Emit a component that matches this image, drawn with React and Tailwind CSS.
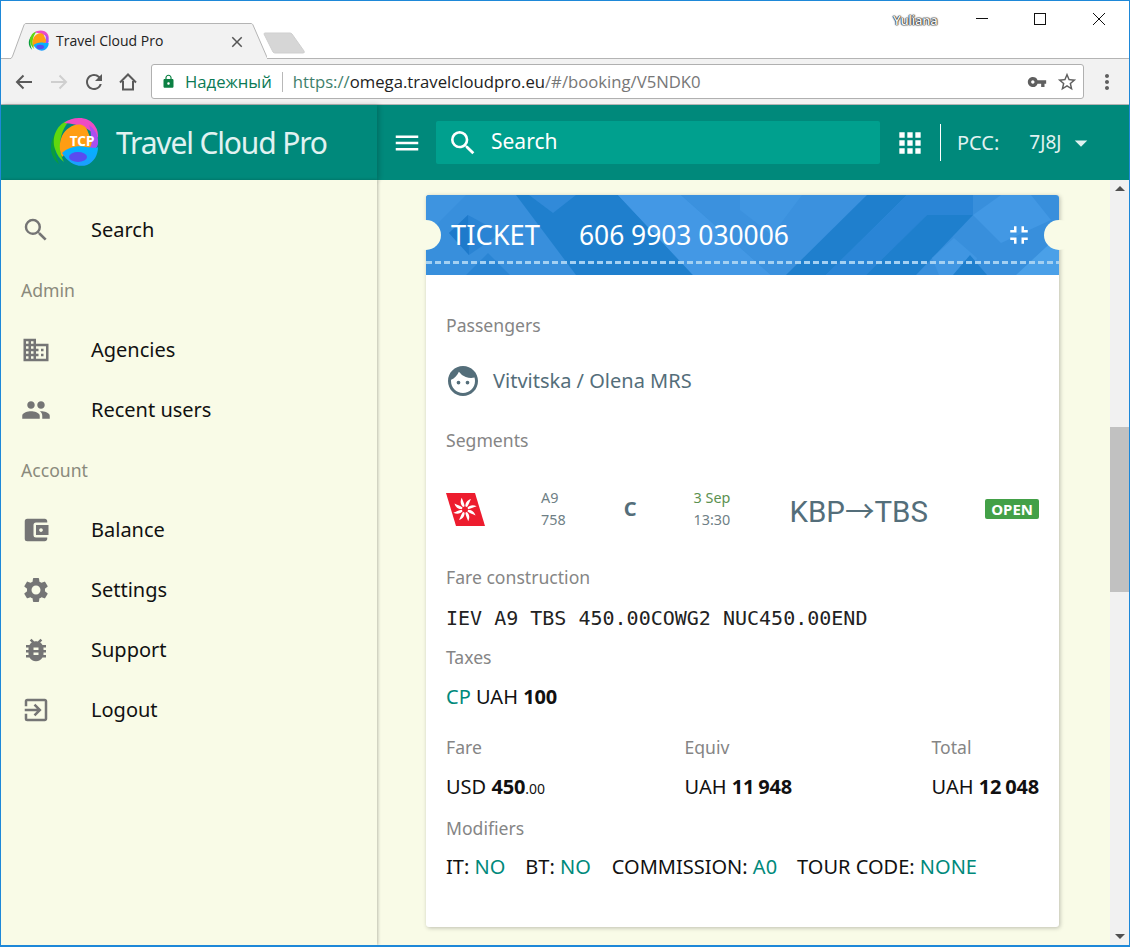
import React from "react";
import {
  MdSearch,
  MdBusiness,
  MdPeople,
  MdAccountBalanceWallet,
  MdSettings,
  MdBugReport,
  MdExitToApp,
  MdApps,
  MdMenu,
  MdFullscreenExit,
  MdFace,
  MdLock,
  MdVpnKey,
  MdStarBorder,
  MdRefresh,
  MdMoreVert,
  MdClose,
  MdArrowDropDown,
} from "react-icons/md";

const sans = "font-['Noto_Sans',sans-serif]";

function Logo({ size, label }) {
  return (
    <svg width={size} height={size} viewBox="0 0 52 52">
      <defs>
        <linearGradient id={`lg-${size}`} x1="0" y1="0" x2="0" y2="1">
          <stop offset="0" stopColor="#00b4ff" />
          <stop offset="1" stopColor="#1e9dff" />
        </linearGradient>
      </defs>
      <path d="M8 14C0 24-1 38 10 47 5 37 4 26 8 14z" fill="#0a9e3c" />
      <path d="M21 3C8 6 2 20 6 32c2 6 5 10 9 13C9 34 9 16 21 3z" fill="#5fd80f" />
      <path d="M15 6C24-1 40-1 46 9c3 4 3 8 3 12C42 12 30 7 15 6z" fill="#ee4bc4" />
      <path d="M40 8c6 4 10 11 9 19-1 5-5 7-9 5 2-8 3-16 0-24z" fill="#a94ff0" />
      <path d="M13 19c4-8 13-13 20-11 6 2 6 9 9 14 2 5-1 10-5 10-8-1-18 2-24 8-3-7-3-14 0-21z" fill="#ff9d12" />
      <path d="M13 36c6-6 16-8 24-6 6 1 12 1 12 0 0 8-4 15-11 18-9 3-19-2-25-12z" fill={`url(#lg-${size})`} />
      <ellipse cx="29" cy="40" rx="9" ry="5" fill="#5a4cf0" />
      {label && (
        <text x="33" y="29" textAnchor="middle" fontSize="13.500" fontWeight="700" fill="#fff" fontFamily="Noto Sans, sans-serif">
          TCP
        </text>
      )}
    </svg>
  );
}

function BrowserChrome() {
  return (
    <div className="shrink-0">
      <div className="relative h-[57px] bg-white">
        <svg className="absolute left-[6px] top-[22px]" width="260" height="36" viewBox="0 0 260 36">
          <path d="M0 36h1c3 0 4-1 5-4L17 2c.6-1 1-1.500 2-1.500h225c1 0 1.500.5 2 1.500l13 30c1 3 2 4 4 4" fill="#f2f2f2" stroke="#b4b4b4" />
        </svg>
        <svg className="absolute left-[261px] top-[30px]" width="46" height="24" viewBox="0 0 46 24">
          <path d="M2 3q0-1 1-1h25q1 0 2 1l12 17q1 2-1 2H13q-1 0-2-1z" fill="#d6d6d6" stroke="#cfcfcf" />
        </svg>
        <div className="absolute left-[27px] top-[29px]">
          <Logo size={22} />
        </div>
        <span className="absolute left-[55px] top-[30px] font-['Open_Sans',sans-serif] text-[14px] leading-5 text-[#222]">Travel Cloud Pro</span>
        <MdClose className="absolute left-[227px] top-[32px] text-[#555]" size={18} />
        <span className="absolute left-[892px] top-[10px] font-['Open_Sans',sans-serif] text-[13px] leading-[18px] text-[#f4f4f4] font-semibold tracking-[-0.3px] [text-shadow:0_0_1px_#222,0_0_1px_#222,0_0_1px_#222,0_0_2px_#444]">
          Yuliana
        </span>
        <svg className="absolute left-[974px] top-[11px]" width="130" height="14" viewBox="0 0 130 14">
          <path d="M1 6.500h12" stroke="#111" fill="none" />
          <rect x="59.500" y="1.500" width="11" height="11" stroke="#111" fill="none" />
          <path d="M118 1l12 12M130 1l-12 12" stroke="#111" fill="none" />
        </svg>
      </div>
      <div className="flex h-[47px] items-center border-y border-y-[#b4b4b4] bg-[#f2f2f2]">
        <div className="flex w-[150px] items-center">
          <svg className="ml-[13px]" width="20" height="20" viewBox="0 0 20 20" fill="none" stroke="#5a5a5a" strokeWidth="2">
            <path d="M18 10H3M9.500 3.500 3 10l6.500 6.500" />
          </svg>
          <svg className="ml-[15px]" width="20" height="20" viewBox="0 0 20 20" fill="none" stroke="#cfcfcf" strokeWidth="2">
            <path d="M2 10h15M10.500 3.500 17 10l-6.500 6.500" />
          </svg>
          <MdRefresh className="ml-[13px] text-[#5a5a5a]" size={24} />
          <svg className="ml-[12px]" width="20" height="20" viewBox="0 0 20 20" fill="none" stroke="#5a5a5a" strokeWidth="2">
            <path d="M2 10.500 10 2.500l8 8M5 9v8.500h10V9" />
          </svg>
        </div>
        <div className="flex h-[35px] w-[933px] items-center rounded-[3px] border border-[#b0b0b0] bg-white font-['Open_Sans',sans-serif] text-[16.700px]">
          <MdLock className="ml-[9px] text-[#0b8043]" size={15} />
          <span className="ml-[9px] text-[#0b7a55]">Надежный</span>
          <span className="ml-[10px] h-5 w-px bg-[#b8b8b8]" />
          <span className="ml-[10px] text-[#3f7f6c]">https://</span>
          <span className="text-[#222]">omega.travelcloudpro.eu</span>
          <span className="text-[#777]">/#/booking/V5NDK0</span>
          <MdVpnKey className="ml-auto text-[#5f5f5f]" size={20} />
          <MdStarBorder className="ml-[9px] mr-[5px] text-[#5f5f5f]" size={22} />
        </div>
        <MdMoreVert className="ml-[11px] text-[#5f5f5f]" size={24} />
      </div>
    </div>
  );
}

function AppHeader() {
  return (
    <div className="relative flex h-[75px] shrink-0 items-center bg-[#00897b] text-[#e0f2f1]">
      <div className="flex h-full w-[376px] shrink-0 items-center shadow-[2px_0_5px_rgba(0,0,0,0.2)]">
        <div className="ml-[48px]">
          <Logo size={52} label />
        </div>
        <span className={`${sans} ml-[15px] text-[30px] leading-10 tracking-[-1.150px]`}>Travel Cloud Pro</span>
      </div>
      <MdMenu className="ml-[15px] text-white" size={30} />
      <div className="ml-[14px] flex h-[43px] w-[444px] items-center rounded-[2px] bg-[#00a08e] text-white">
        <MdSearch className="ml-[11px]" size={32} />
        <span className={`${sans} ml-[12px] mt-[-2px] text-[21px]`}>Search</span>
      </div>
      <MdApps className="ml-[14px] text-white" size={32} />
      <span className="ml-[14px] h-[37px] w-px bg-white" />
      <span className={`${sans} ml-[16px] text-[20px]`}>PCC:</span>
      <span className={`${sans} ml-[30px] text-[19px]`}>7J8J</span>
      <MdArrowDropDown className="ml-[5px]" size={30} />
    </div>
  );
}

function NavItem({ icon: Icon, children }) {
  return (
    <div className="flex h-[60px] items-center pl-[20px]">
      <div className="flex w-[70px] items-center">
        <Icon className="text-[#757575]" size={30} />
      </div>
      <span className="text-[20px] text-[#111]">{children}</span>
    </div>
  );
}

function NavLabel({ children }) {
  return <div className="flex h-[60px] items-center pl-[20px] text-[17.600px] text-[#8a8a7c]">{children}</div>;
}

function Sidebar() {
  return (
    <div className={`${sans} z-10 h-full w-[376px] shrink-0 bg-[#f9fbe7] pt-5 shadow-[1px_0_3px_rgba(0,0,0,0.25)]`}>
      <NavItem icon={MdSearch}>Search</NavItem>
      <NavLabel>Admin</NavLabel>
      <NavItem icon={MdBusiness}>Agencies</NavItem>
      <NavItem icon={MdPeople}>Recent users</NavItem>
      <NavLabel>Account</NavLabel>
      <NavItem icon={MdAccountBalanceWallet}>Balance</NavItem>
      <NavItem icon={MdSettings}>Settings</NavItem>
      <NavItem icon={MdBugReport}>Support</NavItem>
      <NavItem icon={MdExitToApp}>Logout</NavItem>
    </div>
  );
}

// header background, polygons eyeballed from the screenshot
function TicketPattern() {
  return (
    <svg className="absolute inset-0" width="633" height="80" viewBox="0 0 633 80">
      <rect width="633" height="80" fill="#388fdc" />
      <path d="M0 0h40L0 40z" fill="#3e94e0" />
      <path d="M90 0h102l75 80H150l-30-40z" fill="#1f7fcd" />
      <path d="M103 0l24 18 23-18z" fill="#318ad9" />
      <path d="M42 20 23 38l20 22 32-22z" fill="#2a84d4" />
      <path d="M42 20 23 38l20 22z" fill="#1e7acb" />
      <path d="M40 80l22-22 22 22z" fill="#2a85d4" />
      <path d="M192 0h63l90 80h-78z" fill="#4398e5" />
      <path d="M255 0h186l-81 80h-15z" fill="#3b91de" />
      <path d="M314 0h62l-30 40-32-25z" fill="#4096e2" />
      <path d="M441 0h40l-81 80h-40z" fill="#1f7fcd" />
      <path d="M481 0h66v20h-46l-61 60h-40z" fill="#2a85d6" />
      <path d="M501 20h46l-57 60h-50z" fill="#1e7fcd" />
      <path d="M547 20 575 0h30l20 25-50 23z" fill="#4298e4" />
      <path d="M506 63l22-20 23 20-5 17h-33z" fill="#4096e2" />
      <path d="M527 80l17-20 17 20z" fill="#1f7fcd" />
      <path d="M590 80l43-40v40z" fill="#4aa0e8" />
    </svg>
  );
}

function SectionLabel({ children, className = "" }) {
  return <div className={`text-[17.600px] leading-10 text-[#858585] ${className}`}>{children}</div>;
}

function AirlineLogo() {
  const blades = [0, 45, 90, 135, 180, 225, 270, 315];
  return (
    <svg width="39" height="33" viewBox="0 0 39 33">
      <path d="M0 0h29l10 33H10z" fill="#ed1c2e" />
      <g transform="translate(19 16.500)">
        {blades.map((a) => (
          <path key={a} transform={`rotate(${a})`} d="M.5-3C0-6 2-9.500 6-10.500 4.500-8 4-5 2-2.500z" fill="#fff" />
        ))}
      </g>
    </svg>
  );
}

function Ticket() {
  return (
    <div className={`${sans} w-[633px] rounded-[3px] bg-white pb-[40px] shadow-[1px_1px_4px_rgba(0,0,0,0.25)]`}>
      <div className="relative h-20 rounded-t-[3px] text-white">
        <div className="absolute inset-0 overflow-hidden rounded-t-[3px]">
          <TicketPattern />
        </div>
        <div className="relative flex h-20 items-start pl-[25px] pt-[20px] pr-[25px]">
          <span className="text-[27.300px] leading-10">TICKET</span>
          <span className="ml-[39px] text-[26.400px] leading-10">606 9903 030006</span>
          <MdFullscreenExit className="ml-auto mt-[5px]" size={30} />
        </div>
        <div className="absolute inset-x-0 top-[66px] h-[3px] bg-[repeating-linear-gradient(90deg,#a3d0f2_0,#a3d0f2_6px,transparent_6px,transparent_9px)]" />
        <div className="absolute left-[-15px] top-[25px] size-[30px] rounded-full bg-[#f9fbe7]" />
        <div className="absolute right-[-15px] top-[25px] size-[30px] rounded-full bg-[#f9fbe7]" />
      </div>

      <div className="px-5 pt-[30px]">
        <SectionLabel>Passengers</SectionLabel>
        <div className="mt-[16px] flex h-10 items-center text-[20px] text-[#546e7a]">
          <MdFace className="ml-[-1px]" size={36} />
          <span className="ml-[12px]">Vitvitska / Olena MRS</span>
        </div>
        <SectionLabel className="mt-[19px]">Segments</SectionLabel>

        <div className="mt-[29px] flex h-10 items-center">
          <AirlineLogo />
          <div className="ml-[56px] text-[14.400px] leading-[22px] text-[#6f7f86]">
            <div>A9</div>
            <div>758</div>
          </div>
          <span className="ml-[58px] text-[20px] font-bold text-[#546e7a]">C</span>
          <div className="ml-[57px] text-[14.400px] leading-[22px]">
            <div className="text-[#5c9150]">3 Sep</div>
            <div className="text-[#6f7f86]">13:30</div>
          </div>
          <span className="ml-[59px] mt-[3px] font-['Roboto',sans-serif] text-[29.500px] text-[#546e7a]">
            KBP<span className="font-['Noto_Sans_CJK_SC',sans-serif]">→</span>TBS
          </span>
          <span className="ml-auto rounded-[2px] bg-[#43a047] px-[6px] text-[15px] font-bold leading-5 text-white">OPEN</span>
        </div>

        <SectionLabel className="mt-[28px]">Fare construction</SectionLabel>
        <div className="h-10 font-['DejaVu_Sans_Mono',monospace] text-[20px] leading-[42px] text-[#222]">IEV A9 TBS 450.00COWG2 NUC450.00END</div>
        <SectionLabel>Taxes</SectionLabel>
        <div className="text-[20px] leading-10 text-[#111]">
          <span className="text-[#00897b]">CP</span> UAH <b className="tracking-[-0.2px]">100</b>
        </div>

        <div className="mt-[10px] flex justify-between">
          <div>
            <SectionLabel>Fare</SectionLabel>
            <div className="text-[20px] leading-10 text-[#111]">
              USD <b className="tracking-[-0.2px]">450</b>
              <span className="text-[14px]">.00</span>
            </div>
          </div>
          <div>
            <SectionLabel>Equiv</SectionLabel>
            <div className="text-[20px] leading-10 text-[#111]">
              UAH <b className="tracking-[-0.2px] [word-spacing:-1px]">11 948</b>
            </div>
          </div>
          <div>
            <SectionLabel>Total</SectionLabel>
            <div className="text-[20px] leading-10 text-[#111]">
              UAH <b className="tracking-[-0.2px] [word-spacing:-1px]">12 048</b>
            </div>
          </div>
        </div>

        <SectionLabel className="mt-[-1px] h-[39px]">Modifiers</SectionLabel>
        <div className="flex gap-5 text-[20px] leading-10 text-[#111]">
          <span>
            IT: <span className="text-[#00897b]">NO</span>
          </span>
          <span>
            BT: <span className="text-[#00897b]">NO</span>
          </span>
          <span className="ml-px">
            COMMISSION: <span className="text-[#00897b]">A0</span>
          </span>
          <span>
            TOUR CODE: <span className="text-[#00897b]">NONE</span>
          </span>
        </div>
      </div>
    </div>
  );
}

function Scrollbar() {
  return (
    <div className="flex w-[19px] shrink-0 flex-col bg-[#f1f1f1]">
      <div className="flex h-[20px] items-start justify-center pt-[6px]">
        <div className="size-0 border-x-[5px] border-b-[5px] border-x-transparent border-b-[#505050]" />
      </div>
      <div className="mt-[227px] h-[165px] bg-[#c1c1c1]" />
      <div className="mt-auto flex h-[20px] items-end justify-center pb-[6px]">
        <div className="size-0 border-x-[5px] border-t-[5px] border-x-transparent border-t-[#505050]" />
      </div>
    </div>
  );
}

export default function App() {
  return (
    <div className="flex h-[947px] w-[1130px] flex-col overflow-hidden border border-b-2 border-[#1e88d8] bg-white">
      <BrowserChrome />
      <AppHeader />
      <div className="flex min-h-0 flex-1">
        <Sidebar />
        <div className="min-w-0 flex-1 overflow-hidden bg-[#f9fbe7] pl-[49px] pt-[15px]">
          <Ticket />
        </div>
        <Scrollbar />
      </div>
    </div>
  );
}
